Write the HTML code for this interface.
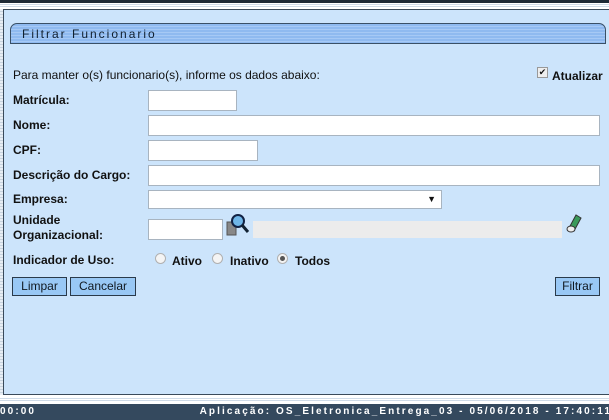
<!DOCTYPE html>
<html><head><meta charset="utf-8"><style>
*{margin:0;padding:0;box-sizing:border-box}
body{width:609px;height:420px;overflow:hidden;background:#fff;font-family:"Liberation Sans",Arial,sans-serif;font-size:12px;color:#111;position:relative}
.a{position:absolute}
.top{left:0;top:0;width:609px;height:3px;background:#1e2a36}
.tl{left:0;width:609px;height:1px;background:#cfdbe8}
.side{left:0;top:9px;width:3px;height:386px;background:repeating-linear-gradient(#e8eef4 0 2px,#c8d4e0 2px 3px)}
.panel{left:3px;top:9px;width:610px;height:386px;background:#cce4fb;border:1px solid #3a4a5a}
.title{left:10px;top:23px;width:596px;height:21px;border:1px solid #3a5066;border-radius:7px 7px 0 0;background:repeating-linear-gradient(#8fbaf0 0 2px,#a6c9f5 2px 3px);font-size:12px;letter-spacing:2px;color:#102030;padding:3px 0 0 11px}
.lbl{left:13px;font-weight:bold;font-size:12px}
.in{background:#fff;border:1px solid #a8b4c0}
.btn{top:277px;height:19px;background:#99c8f5;border:1px solid #2a3a4a;font-size:12px;text-align:center;line-height:17px;color:#101820}
.rad{width:11px;height:11px;border-radius:50%;border:1px solid #b0b0b0;background:#f4f4f4;top:253px}
.foot{left:0;top:404px;width:609px;height:16px;background:#34495e;color:#fff;font-weight:bold;font-size:10px;letter-spacing:2.1px;line-height:16px}
</style></head><body>
<div class="a top"></div>
<div class="a tl" style="top:4px"></div><div class="a tl" style="top:6px"></div>
<div class="a side"></div>
<div class="a panel"></div>
<div class="a title">Filtrar Funcionario</div>
<div class="a" style="left:13px;top:68px">Para manter o(s) funcionario(s), informe os dados abaixo:</div>
<div class="a" style="left:537px;top:67px;width:11px;height:11px;border:1px solid #999;background:#eee;font-size:9px;line-height:9px;text-align:center">✔</div>
<div class="a" style="left:552px;top:69px;font-weight:bold">Atualizar</div>
<div class="a lbl" style="top:93px">Matrícula:</div><div class="a in" style="left:148px;top:90px;width:89px;height:21px"></div>
<div class="a lbl" style="top:118px">Nome:</div><div class="a in" style="left:148px;top:115px;width:452px;height:21px"></div>
<div class="a lbl" style="top:143px">CPF:</div><div class="a in" style="left:148px;top:140px;width:110px;height:21px"></div>
<div class="a lbl" style="top:168px">Descrição do Cargo:</div><div class="a in" style="left:148px;top:165px;width:452px;height:21px"></div>
<div class="a lbl" style="top:192px">Empresa:</div><div class="a in" style="left:148px;top:190px;width:294px;height:19px"><span class="a" style="right:5px;top:3px;font-size:9px">▼</span></div>
<div class="a lbl" style="top:213px;line-height:15px">Unidade<br>Organizacional:</div>
<div class="a in" style="left:148px;top:219px;width:75px;height:21px"></div>
<svg class="a" style="left:226px;top:213px" width="24" height="24"><rect x="1" y="9" width="9" height="13" fill="#888" stroke="#555"/><circle cx="12" cy="8" r="6" fill="#6fb6e8" stroke="#124" stroke-width="2"/><path d="M16 12 L22 19" stroke="#123" stroke-width="3"/></svg>
<div class="a" style="left:253px;top:221px;width:309px;height:17px;background:#ececec"></div>
<svg class="a" style="left:565px;top:211px" width="18" height="22"><path d="M4 17 L11 4 L16 7 L9 20 Z" fill="#3a9a5a" stroke="#333"/><ellipse cx="6" cy="18" rx="4" ry="3" fill="#eee" stroke="#333"/></svg>
<div class="a lbl" style="top:253px">Indicador de Uso:</div>
<div class="a rad" style="left:155px"></div><div class="a" style="left:172px;top:254px;font-weight:bold">Ativo</div>
<div class="a rad" style="left:212px"></div><div class="a" style="left:230px;top:254px;font-weight:bold">Inativo</div>
<div class="a rad" style="left:277px"><div style="width:5px;height:5px;border-radius:50%;background:#555;margin:2px"></div></div><div class="a" style="left:295px;top:254px;font-weight:bold">Todos</div>
<div class="a btn" style="left:12px;width:55px">Limpar</div>
<div class="a btn" style="left:70px;width:66px">Cancelar</div>
<div class="a btn" style="left:555px;width:45px">Filtrar</div>
<div class="a tl" style="top:398px"></div><div class="a tl" style="top:400px"></div>
<div class="a foot"><span style="position:absolute;left:0">00:00</span><span style="position:absolute;right:-3px;white-space:nowrap">Aplicação: OS_Eletronica_Entrega_03 - 05/06/2018 - 17:40:11</span></div>
</body></html>
